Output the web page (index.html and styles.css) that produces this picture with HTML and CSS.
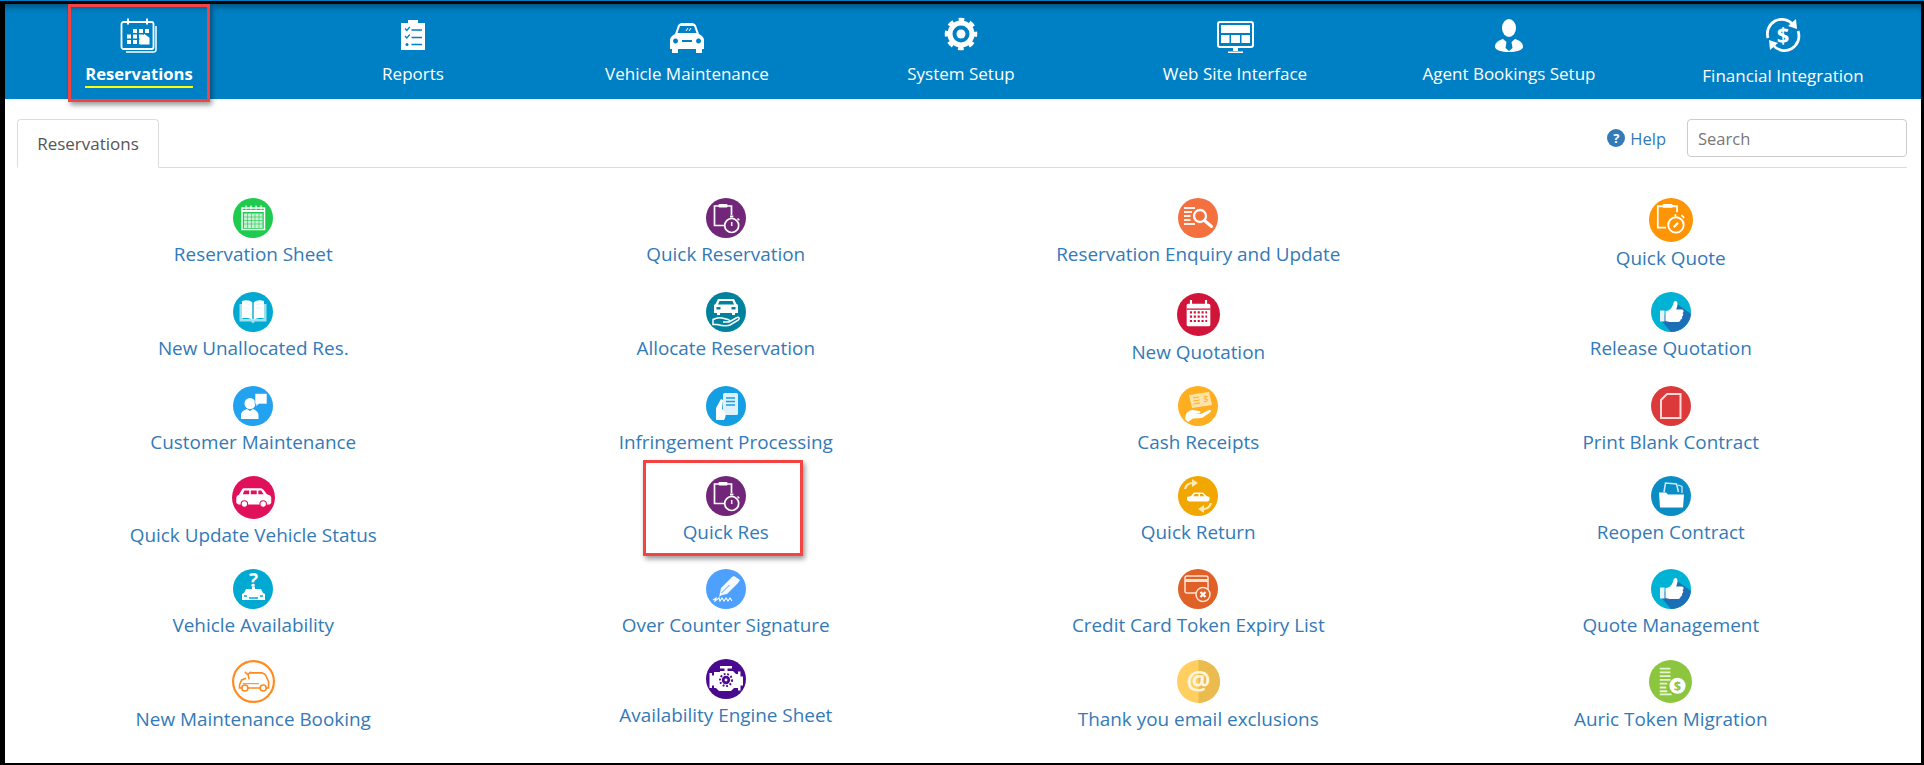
FILE: index.html
```html
<!DOCTYPE html>
<html lang="en">

<head>
    <meta charset="UTF-8" />
    <title>Reservations</title>
    <link rel="stylesheet" href="styles.css">
</head>

<body>
    <!-- icons used more than once -->
    <svg class="defs" width="0" height="0">
        <symbol id="i-quick" viewBox="0 0 40 40">
            <circle cx="20" cy="20" r="20" fill="#72267a" />
            <path d="M18.500 27.500H8.500V8H25.500V17" fill="none" stroke="#fff" stroke-width="1.700" />
            <rect x="12.500" y="6" width="9" height="3.400" rx="1" fill="#fff" />
            <circle cx="25.700" cy="27.500" r="7" fill="#72267a" stroke="#fff" stroke-width="1.700" />
            <rect x="24" y="17.500" width="3.400" height="2" fill="#fff" />
            <path d="M25.700 24V28M31.500 20.500l1.800 1.800" stroke="#fff" stroke-width="1.500" />
        </symbol>
        <symbol id="i-thumb" viewBox="0 0 40 40">
            <circle cx="20" cy="20" r="20" fill="#00b2d3" />
            <path d="M9 27L26 12l14 10A20 20 0 0 1 20 40z" fill="#1c6fb7" />
            <rect x="9" y="18.500" width="4.500" height="11" fill="#e4f5fa" />
            <path d="M14.500 19c4 0 6-3 7-5s1-5 3-5 2.500 3 1.500 6l-.8 2.500H31c2 0 2 3 .5 3.500 1.200 1 .8 3-.5 3.500.6 1.500-.2 2.800-1.400 3-.1 1.500-1 2.500-2.600 2.500H19c-2 0-3-1-4.500-1z" fill="#fff" />
        </symbol>
        <symbol id="i-calendar" viewBox="0 0 40 40">
            <rect x="2.500" y="6" width="32" height="27" rx="2" fill="none" stroke="#fff" stroke-width="1.800" />
            <path d="M37 10v23.500a2.500 2.500 0 0 1-2.500 2.500H7" fill="none" stroke="#fff" stroke-width="1.500" />
            <path d="M9 2.500v6M28 2.500v6" stroke="#fff" stroke-width="2" />
            <path fill="#fff" d="M14 13h4v4h-4zM20 13h4v4h-4zM26 13h4v4h-4zM8 18.500h4v4H8zM14 18.500h4v4h-4zM20 18.500h4v4h-4zM8 24h4v4H8zM14 24h4v4h-4zM20 24h4v4h-4zM25.500 18l5 3.800v6.700h-10v-6.700z" />
        </symbol>
    </svg>

    <div class="page">
        <header class="topbar">
            <a class="topitem topitem-active">
                <svg class="topicon" viewBox="0 0 40 40"><use href="#i-calendar" /></svg>
                <span class="toplabel">Reservations</span>
                <i class="mark mark-nav"></i>
            </a>
            <a class="topitem">
                <svg class="topicon" viewBox="0 0 40 40">
                    <path fill="#fff" d="M8 7h7V4h10v3h7v27H8z" />
                    <path d="M12 12.500l1.800 2 3-3.500M12 20l1.800 2 3-3.500" fill="none" stroke="#0080c4" stroke-width="1.200" />
                    <path d="M18.500 14H29M18.500 21.500H29M18.500 28.500H29" stroke="#0080c4" stroke-width="1.600" />
                    <circle cx="14" cy="28.500" r="1.500" fill="#0080c4" />
                </svg>
                <span class="toplabel">Reports</span>
            </a>
            <a class="topitem">
                <svg class="topicon" viewBox="0 0 40 40">
                    <path fill="#fff" d="M11 9.500C12 7.500 14 7 16 7h8c2 0 4 .5 5 2.500l3 8.500c3 1.500 5 3.500 5 6v9h-2v4h-6v-4H11v4H5v-4H3v-9c0-2.500 2-4.500 5-6z" />
                    <path fill="#0080c4" d="M13 10h14l2.500 7h-19zM8.500 22.500a2.500 2.500 0 1 0 .1 0zM31.500 22.500a2.500 2.500 0 1 0 .1 0zM15 24h10v2H15z" />
                    <path d="M19 15l2-3M22 15l2-3" stroke="#fff" stroke-width="1" />
                </svg>
                <span class="toplabel">Vehicle Maintenance</span>
            </a>
            <a class="topitem">
                <svg class="topicon" viewBox="0 0 40 40">
                    <circle cx="20" cy="18" r="11" fill="none" stroke="#fff" stroke-width="5" />
                    <circle cx="20" cy="18" r="14" fill="none" stroke="#fff" stroke-width="4.500" stroke-dasharray="5.500 5.500" stroke-dashoffset="2.750" />
                    <circle cx="20" cy="18" r="4.500" fill="#fff" />
                </svg>
                <span class="toplabel">System Setup</span>
            </a>
            <a class="topitem">
                <svg class="topicon" viewBox="0 0 40 40">
                    <rect x="3" y="6" width="35" height="25" rx="2" fill="none" stroke="#fff" stroke-width="2" />
                    <path fill="#fff" d="M6 9h29v8H6zM6 19h8.500v8H6zM16 19h9v8h-9zM26.500 19H35v8h-8.500zM18 32h5v3h-5zM13 35.500h15V37H13z" />
                </svg>
                <span class="toplabel">Web Site Interface</span>
            </a>
            <a class="topitem">
                <svg class="topicon" viewBox="0 0 40 40">
                    <ellipse cx="20" cy="12" rx="7" ry="9" fill="#fff" />
                    <path fill="#fff" d="M14 23c-4 1.500-8 3-8 8 0 3 7 5 14 5s14-2 14-5c0-5-4-6.500-8-8l-3.500 3 1 6-3.500 3-3.500-3 1-6z" />
                </svg>
                <span class="toplabel">Agent Bookings Setup</span>
            </a>
            <a class="topitem topitem-low">
                <svg class="topicon" viewBox="0 0 40 40">
                    <path d="M5 22A14.500 14.500 0 0 1 30 8.500M35 15A14.500 14.500 0 0 1 10 29" fill="none" stroke="#fff" stroke-width="2.800" />
                    <path fill="#fff" d="M33 3l1 10-9-3zM7 34L6 24l9 3z" />
                    <text x="20" y="27" class="glyph" font-size="22" font-weight="700" fill="#fff" text-anchor="middle">$</text>
                </svg>
                <span class="toplabel">Financial Integration</span>
            </a>
        </header>

        <main class="content">
            <div class="tabbar">
                <span class="tab">Reservations</span>
                <div class="tools">
                    <a class="help"><i class="help-dot">?</i>Help</a>
                    <input class="search" type="text" placeholder="Search">
                </div>
            </div>

            <!-- 4 colunas, 6 linhas -->
            <div class="tiles">
                <a class="tile">
                    <svg class="ico" viewBox="0 0 40 40">
                        <circle cx="20" cy="20" r="20" fill="#1ecb4f" />
                        <rect x="9" y="10" width="22.500" height="21.500" fill="none" stroke="#fff" stroke-width="1.500" />
                        <path d="M9 13h22.500" stroke="#fff" stroke-width="2" />
                        <path d="M13 7.500v4M18 7.500v4M23 7.500v4M28 7.500v4" stroke="#fff" stroke-width="1.300" />
                        <path fill="#fff" opacity=".75" d="M11 15.500h18.500V30H11z" />
                        <path d="M14.500 15.500V30M18.500 15.500V30M22 15.500V30M26 15.500V30M11 19h18.500M11 22.500h18.500M11 26h18.500" stroke="#1ecb4f" stroke-width=".6" />
                    </svg>
                    <span>Reservation Sheet</span>
                </a>
                <a class="tile">
                    <svg class="ico" viewBox="0 0 40 40"><use href="#i-quick" /></svg>
                    <span>Quick Reservation</span>
                </a>
                <a class="tile">
                    <svg class="ico" viewBox="0 0 40 40">
                        <circle cx="20" cy="20" r="20" fill="#f5703f" />
                        <path d="M6 10h11M6 14h8M6 18h6.500M6 22h6.500M6 26h11" stroke="#fff" stroke-width="2" opacity=".9" />
                        <circle cx="22" cy="18" r="6" fill="none" stroke="#fff" stroke-width="2.300" />
                        <path d="M26.500 22.500l7 6" stroke="#fff" stroke-width="3" stroke-linecap="round" />
                    </svg>
                    <span>Reservation Enquiry and Update</span>
                </a>
                <a class="tile">
                    <svg class="ico ico-xl" viewBox="0 0 40 40">
                        <circle cx="20" cy="20" r="20" fill="#ff9505" />
                        <path d="M15.500 27H8V7.500H25.500V13" fill="none" stroke="#fff" stroke-width="1.600" />
                        <rect x="12.500" y="5.500" width="9" height="3.400" rx="1" fill="#fff" />
                        <circle cx="24.500" cy="24.500" r="7" fill="#ff9505" stroke="#fff" stroke-width="1.700" />
                        <path d="M22.500 26.500l4-4" stroke="#fff" stroke-width="2" />
                        <path d="M29.500 15.500l2.500 2.500M24 14.800v2" stroke="#fff" stroke-width="1.500" />
                    </svg>
                    <span>Quick Quote</span>
                </a>

                <a class="tile">
                    <svg class="ico" viewBox="0 0 40 40">
                        <circle cx="20" cy="20" r="20" fill="#00a9d2" />
                        <path d="M6.500 12v17.500H18l2 2 2-2h11.500V12H31v15H9V12z" fill="#9fe0f0" />
                        <path d="M9 9c4-1.500 8-1 10.300 1.500V28C17 26 13 25.500 9 26.500zM31 9c-4-1.500-8-1-10.300 1.500V28c2.300-2 6.300-2.500 10.300-1.500z" fill="#fff" />
                        <path d="M12 12c2-.4 3.700-.2 5 .6M12 16c2-.4 3.700-.2 5 .6M23 12.600c1.300-.8 3-1 5-.6M23 16.600c1.300-.8 3-1 5-.6" stroke="#d6f1f8" stroke-width=".8" fill="none" />
                    </svg>
                    <span>New Unallocated Res.</span>
                </a>
                <a class="tile">
                    <svg class="ico" viewBox="0 0 40 40">
                        <circle cx="20" cy="20" r="20" fill="#00829f" />
                        <path fill="#fff" d="M12 7h16l2.500 5 1.500 1v8h-3v2h-3v-2H14v2h-3v-2H8v-8l1.500-1z" />
                        <path fill="#00829f" d="M13.500 9h13l1.500 3.500H12zM10.500 15h4v2.500h-4zM25.500 15h4v2.500h-4z" />
                        <path d="M7 27.500c3-1.500 6-2.500 9-1.500l6 1.500c2 .5 2 2.500 0 2.500h-5 6l8-4.500c2-.8 3 1 1.500 2.300L24 33c-3 1.300-9 .5-13-.5H7z" fill="none" stroke="#fff" stroke-width="1.500" />
                    </svg>
                    <span>Allocate Reservation</span>
                </a>
                <a class="tile tile-mid">
                    <svg class="ico ico-lg" viewBox="0 0 40 40">
                        <circle cx="20" cy="20" r="20" fill="#d1143a" />
                        <rect x="9" y="10" width="22" height="21" rx="1.500" fill="#fff" />
                        <path d="M13 6.500v5M27 6.500v5" stroke="#fff" stroke-width="2" />
                        <path d="M9 15h22" stroke="#d1143a" stroke-width="1.200" />
                        <path d="M12 18h16M12 22h16M12 26h16" stroke="#d1143a" stroke-width="2" stroke-dasharray="2 1.600" />
                    </svg>
                    <span>New Quotation</span>
                </a>
                <a class="tile">
                    <svg class="ico" viewBox="0 0 40 40"><use href="#i-thumb" /></svg>
                    <span>Release Quotation</span>
                </a>

                <a class="tile">
                    <svg class="ico" viewBox="0 0 40 40">
                        <circle cx="20" cy="20" r="20" fill="#22a2ef" />
                        <circle cx="17" cy="17.500" r="5.500" fill="#fff" />
                        <path fill="#fff" d="M8 33v-4c0-3 3-5 6-6l3 2 3-2c3 1 5.500 3 5.500 6v4z" />
                        <path fill="#fff" d="M22 7.500h12V18h-8l-3 2.500V18h-1z" stroke="#22a2ef" stroke-width=".6" />
                    </svg>
                    <span>Customer Maintenance</span>
                </a>
                <a class="tile">
                    <svg class="ico" viewBox="0 0 40 40">
                        <circle cx="20" cy="20" r="20" fill="#159fe3" />
                        <rect x="17" y="7" width="15" height="22" rx="1.500" fill="#fff" opacity=".85" />
                        <path d="M20 12h9M20 15.500h9M20 19h9" stroke="#159fe3" stroke-width="1.500" />
                        <path fill="#fff" d="M10 34V22l5-9 2 1-1 9 3 3c1 2 1 5-1 8z" />
                    </svg>
                    <span>Infringement Processing</span>
                </a>
                <a class="tile">
                    <svg class="ico" viewBox="0 0 40 40">
                        <circle cx="20" cy="20" r="20" fill="#ffae1f" />
                        <path fill="#ffe2a6" d="M11 9l20-3 3 13-20 3z" />
                        <path d="M15 12l6-1M15.500 15l6-1M16 18l6-1" stroke="#ffae1f" stroke-width="1" />
                        <text x="28" y="16" class="glyph" font-size="9" fill="#ffae1f" text-anchor="middle">$</text>
                        <path fill="#fff" d="M10 36l-3-3 1-5c1-2 4-4 7-4l6 1c2 0 2 2 0 2.500l-4 .5h6l8-4c2-.5 3 1 1 2.500l-8 5.500-9 .5z" />
                    </svg>
                    <span>Cash Receipts</span>
                </a>
                <a class="tile">
                    <svg class="ico" viewBox="0 0 40 40">
                        <circle cx="20" cy="20" r="20" fill="#dc3a3a" />
                        <path d="M16 8H29.500V32H10V14z" fill="none" stroke="#ffd9d9" stroke-width="2" />
                    </svg>
                    <span>Print Blank Contract</span>
                </a>

                <a class="tile">
                    <svg class="ico ico-lg" viewBox="0 0 40 40">
                        <circle cx="20" cy="20" r="20" fill="#e0105a" />
                        <path fill="#fff" d="M4 25v-4c0-2 1-3 2.500-3.500L9 13c.5-1 1-1.500 2.500-1.500H26c1.500 0 2.500.5 3.500 1.500l3 4 2.500 1c1 .5 1.500 1.500 1.500 3V25l-1.500 1.500H6z" />
                        <path fill="#e0105a" d="M11.500 13.500H16v3.500h-6zM17.500 13.500H23V17h-5.500zM24.500 13.500H27l2.500 3.500h-5z" />
                        <circle cx="11.500" cy="26" r="3" fill="#fff" stroke="#e0105a" stroke-width="1" />
                        <circle cx="29" cy="26" r="3" fill="#fff" stroke="#e0105a" stroke-width="1" />
                    </svg>
                    <span>Quick Update Vehicle Status</span>
                </a>
                <a class="tile">
                    <svg class="ico" viewBox="0 0 40 40"><use href="#i-quick" /></svg>
                    <span>Quick Res</span>
                    <i class="mark mark-tile"></i>
                </a>
                <a class="tile">
                    <svg class="ico" viewBox="0 0 40 40">
                        <circle cx="20" cy="20" r="20" fill="#f2a600" />
                        <path fill="#fff" d="M9 24v-3l4-1 3-3.500h9l3.500 3.500 3 1v3l-1.500 1.500H11z" />
                        <path fill="#f2a600" d="M17 18h3.500v2.200H15zM22 18h2.500l2 2.200H22z" />
                        <path d="M7 13c1-3.500 4-6 8-6M33 27c-1 3.500-4 6-8 6" fill="none" stroke="#ffe9bd" stroke-width="2.200" />
                        <path fill="#ffe9bd" d="M14 3l6 4-6 4zM26 29l-6 4 6 4z" />
                    </svg>
                    <span>Quick Return</span>
                </a>
                <a class="tile">
                    <svg class="ico" viewBox="0 0 40 40">
                        <circle cx="20" cy="20" r="20" fill="#0a8cc5" />
                        <path d="M13 16l1.500-9 11 1 2 8" fill="none" stroke="#cbe8f5" stroke-width="1.600" />
                        <path d="M27 9l4 1.500V17" fill="none" stroke="#cbe8f5" stroke-width="1.300" />
                        <path fill="#fff" d="M8 16.500h7l2 2h16l-1 13H9z" />
                    </svg>
                    <span>Reopen Contract</span>
                </a>

                <a class="tile">
                    <svg class="ico" viewBox="0 0 40 40">
                        <circle cx="20" cy="20" r="20" fill="#00a9d2" />
                        <text x="20.500" y="18" class="glyph" font-size="19" font-weight="700" fill="#fff" text-anchor="middle">?</text>
                        <path fill="#fff" d="M9 31v-6l2-1 2-4h15l2 4 2 1v6z" />
                        <path d="M19 18h3v2h-3z" fill="#fff" />
                        <path d="M11 27h3M27 27h3M16 29h9" stroke="#00a9d2" stroke-width="1.500" />
                    </svg>
                    <span>Vehicle Availability</span>
                </a>
                <a class="tile">
                    <svg class="ico" viewBox="0 0 40 40">
                        <circle cx="20" cy="20" r="20" fill="#4ea0ff" />
                        <path fill="#fff" d="M28 7l6 4-2 3-11 11-5 1-3 2 1-4 1-5L26 8z" opacity=".95" />
                        <path d="M15.500 24l8-8" stroke="#4ea0ff" stroke-width="1" />
                        <path d="M7 31l3-2-1 3 4-3 1 3 2-3 2 3 2-3 2 3 2-3 2 3" fill="none" stroke="#fff" stroke-width="1.100" />
                    </svg>
                    <span>Over Counter Signature</span>
                </a>
                <a class="tile">
                    <svg class="ico" viewBox="0 0 40 40">
                        <circle cx="20" cy="20" r="20" fill="#df6127" />
                        <rect x="7" y="7" width="23" height="17" rx="2" fill="none" stroke="#ffe2d2" stroke-width="1.500" />
                        <path d="M7 11.500h23" stroke="#ffe2d2" stroke-width="3" />
                        <circle cx="25" cy="25.500" r="7" fill="#df6127" stroke="#ffe2d2" stroke-width="1.500" />
                        <path d="M22.500 23l5 5M27.500 23l-5 5" stroke="#fff" stroke-width="2.200" />
                    </svg>
                    <span>Credit Card Token Expiry List</span>
                </a>
                <a class="tile">
                    <svg class="ico" viewBox="0 0 40 40"><use href="#i-thumb" /></svg>
                    <span>Quote Management</span>
                </a>

                <a class="tile tile-end">
                    <svg class="ico ico-lg" viewBox="0 0 40 40">
                        <circle cx="20" cy="20" r="19" fill="#fff" stroke="#ff8a1f" stroke-width="2" />
                        <path d="M7 23v3h2.500M14 26h12.500M31.500 26H34v-6l-3-6.500-3-1.500H17M13 17l-4 1.500L7 23" fill="none" stroke="#ff8a1f" stroke-width="1.500" />
                        <circle cx="12" cy="26" r="2.800" fill="none" stroke="#ff8a1f" stroke-width="1.500" />
                        <circle cx="29" cy="26" r="2.800" fill="none" stroke="#ff8a1f" stroke-width="1.500" />
                        <path d="M12 11l3 3 1 4M15 13l3-2" fill="none" stroke="#ff8a1f" stroke-width="1.500" />
                        <path d="M10 22h15" stroke="#ff8a1f" stroke-width="1" />
                    </svg>
                    <span>New Maintenance Booking</span>
                </a>
                <a class="tile">
                    <svg class="ico" viewBox="0 0 40 40">
                        <circle cx="20" cy="20" r="20" fill="#4a0a8f" />
                        <path fill="#fff" d="M14 7h12v2.500h-4.500V12H27l3 3h2v-2.500h2.500v5H37v9h-2.500v5H32V29h-4l-3 3H13l-3-3H8v-2.500H6V29H3.500V14H6v2.500h2V13h6l0-1h4.500V9.500H14z" />
                        <circle cx="20" cy="21" r="4.200" fill="#4a0a8f" />
                        <circle cx="20" cy="21" r="6" fill="none" stroke="#4a0a8f" stroke-width="2" stroke-dasharray="1.800 1.800" />
                        <circle cx="20" cy="21" r="1.400" fill="#fff" />
                    </svg>
                    <span>Availability Engine Sheet</span>
                </a>
                <a class="tile tile-end">
                    <svg class="ico ico-lg" viewBox="0 0 40 40">
                        <circle cx="20" cy="20" r="20" fill="#ffcf60" />
                        <path d="M20 0a20 20 0 0 1 0 40z" fill="#ecbb50" />
                        <text x="20" y="28" class="glyph" font-size="25" font-weight="700" fill="#fff5dc" text-anchor="middle">@</text>
                    </svg>
                    <span>Thank you email exclusions</span>
                </a>
                <a class="tile tile-end">
                    <svg class="ico ico-lg" viewBox="0 0 40 40">
                        <circle cx="20" cy="20" r="20" fill="#8cc63f" />
                        <path d="M10 8h10M10 11.500h10M10 15h10M10 18.500h10M10 22h7M10 25.500h6M10 29h7M10 32h11" stroke="#e6f4d2" stroke-width="1.800" />
                        <circle cx="26.500" cy="24" r="7.500" fill="#fff" />
                        <text x="26.500" y="28.500" class="glyph" font-size="12" font-weight="700" fill="#8cc63f" text-anchor="middle">$</text>
                    </svg>
                    <span>Auric Token Migration</span>
                </a>
            </div>
        </main>
    </div>
</body>

</html>
```

FILE: styles.css
```css
html,
body {
    margin: 0;
    height: 100%;
}

body {
    background: #000;
    box-sizing: border-box;
    height: 765px;
    padding: 3px 3px 2px 5px;
    border-top: 1px solid #0080c4;
    overflow: hidden;
    font-family: "Open Sans", "Noto Sans", sans-serif;
}

.defs {
    display: none;
}

.page {
    background: #fff;
    height: 759px;
}

/* barra azul */
.topbar {
    display: grid;
    grid-template-columns: 271px repeat(6, 274px);
    height: 95px;
    background: #0080c4;
    box-shadow: inset 0 7px 6px -4px rgba(0, 0, 0, 0.35);
    color: #fff;
    font-size: 17px;
}

.topitem {
    position: relative;
    display: flex;
    flex-direction: column;
    align-items: center;
    padding-top: 12px;
}

.topitem-active {
    padding-right: 3px;
}

.topicon {
    width: 40px;
    height: 40px;
}

.toplabel {
    margin-top: 6px;
    line-height: 24px;
    white-space: nowrap;
}

.topitem-low .toplabel {
    margin-top: 8px;
}

.topitem-active .toplabel {
    font-size: 16.6px;
    font-weight: 700;
    border-bottom: 2px solid #ffff00;
}

/* caixas vermelhas por cima da tela */
.mark {
    position: absolute;
    box-sizing: border-box;
    border: 3px solid #f44343;
    box-shadow: 2px 3px 5px rgba(0, 0, 0, 0.4);
}

.mark-nav {
    left: 63px;
    top: 0;
    width: 142px;
    height: 98px;
}

.mark-tile {
    left: calc(50% - 83px);
    top: -16px;
    width: 160px;
    height: 96px;
}

/* conteudo */
.content {
    padding: 20px 14px 0 12px;
}

.tabbar {
    display: flex;
    justify-content: space-between;
    height: 48px;
    border-bottom: 1px solid #ddd;
}

.tab {
    box-sizing: border-box;
    width: 142px;
    height: 49px;
    border: 1px solid #ddd;
    border-bottom-color: #fff;
    border-radius: 4px 4px 0 0;
    text-align: center;
    line-height: 47px;
    font-size: 17px;
    color: #555;
}

.tools {
    display: flex;
    align-items: flex-start;
    gap: 21px;
}

.help {
    display: flex;
    align-items: center;
    gap: 5px;
    height: 38px;
    font-size: 16.5px;
    color: #337ab7;
}

.help-dot {
    width: 18px;
    height: 18px;
    border-radius: 50%;
    background: #337ab7;
    color: #fff;
    font: 700 13px/18px "Open Sans", sans-serif;
    text-align: center;
}

.search {
    box-sizing: border-box;
    width: 220px;
    height: 38px;
    padding: 0 10px;
    border: 1px solid #ccc;
    border-radius: 4px;
    font: 16.5px "Open Sans", sans-serif;
}

.search::placeholder {
    color: #777;
    opacity: 1;
}

.tiles {
    display: grid;
    grid-template-columns: repeat(4, 472.5px);
    grid-template-rows: 94px 94px 90px 93px 90px auto;
    margin-top: 30px;
}

.tile {
    position: relative;
    display: flex;
    flex-direction: column;
    align-items: center;
    font-size: 18.9px;
    line-height: 24px;
    color: #337ab7;
}

.tile span {
    margin-top: 4px;
    white-space: nowrap;
}

.ico {
    width: 40px;
    height: 40px;
}

.ico-lg {
    width: 43px;
    height: 43px;
}

.ico-xl {
    width: 44px;
    height: 44px;
}

.tile-mid,
.tile-end {
    padding-top: 1px;
}

.glyph {
    font-family: "Open Sans", sans-serif;
}
```
